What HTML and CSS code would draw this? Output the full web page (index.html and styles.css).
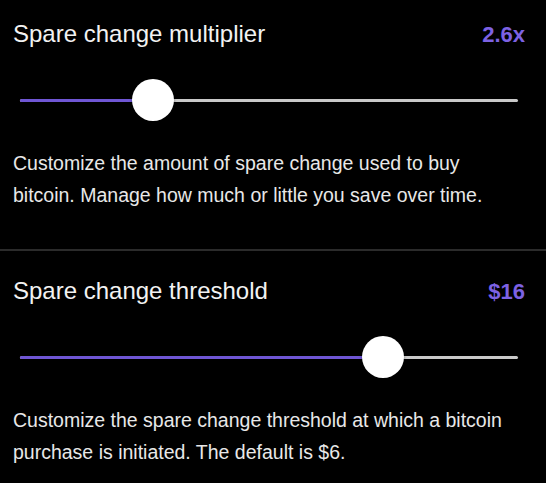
FILE: index.html
```html
<!DOCTYPE html>
<html lang="en">
<head>
<meta charset="utf-8">
<title>Spare change settings</title>
<link rel="stylesheet" href="styles.css">
</head>
<body>
<main class="settings">
  <section class="setting">
    <div class="setting-head">
      <span class="setting-title">Spare change multiplier</span>
      <span class="setting-value">2.6x</span>
    </div>
    <div class="slider">
      <div class="track"></div>
      <div class="fill" style="width: 26.8%"></div>
      <div class="thumb" style="left: calc(26.8% - 21px)"></div>
    </div>
    <p class="setting-desc">Customize the amount of spare change used to buy bitcoin. Manage how much or little you save over time.</p>
  </section>
  <div class="divider"></div>
  <section class="setting">
    <div class="setting-head">
      <span class="setting-title">Spare change threshold</span>
      <span class="setting-value">$16</span>
    </div>
    <div class="slider">
      <div class="track"></div>
      <div class="fill" style="width: 72.8%"></div>
      <div class="thumb" style="left: calc(72.8% - 21px)"></div>
    </div>
    <p class="setting-desc">Customize the spare change threshold at which a bitcoin purchase is initiated. The default is $6.</p>
  </section>
</main>
</body>
</html>
```

FILE: styles.css
```css
html, body {
  margin: 0;
  padding: 0;
  background: #000;
}

body {
  font-family: "Liberation Sans", Arial, Helvetica, sans-serif;
  color: #f2f2f2;
  width: 546px;
  height: 483px;
  overflow: hidden;
}

.settings {
  display: flex;
  flex-direction: column;
}

.setting {
  padding: 20px 0 38px 0;
}

.divider + .setting {
  padding-top: 26px;
}

.setting-head {
  display: flex;
  justify-content: space-between;
  align-items: baseline;
  padding: 0 21px 0 13px;
  height: 28px;
  line-height: 28px;
}

.setting-title {
  font-size: 24px;
  color: #f2f2f2;
}

.setting-value {
  font-size: 22px;
  font-weight: bold;
  color: #7d62e3;
}

.slider {
  position: relative;
  height: 42px;
  margin: 31px 28px 0 20px;
}

.track,
.fill {
  position: absolute;
  top: 20px;
  height: 3px;
  left: 0;
  border-radius: 1.5px;
}

.track {
  right: 0;
  background: #c9c9c9;
}

.fill {
  background: #6f56d4;
}

.thumb {
  position: absolute;
  top: 0;
  width: 42px;
  height: 42px;
  border-radius: 50%;
  background: #fff;
  box-shadow: 0 1px 3px rgba(0, 0, 0, 0.4);
}

.setting-desc {
  margin: 26px 0 0 0;
  padding: 0 21px 0 13px;
  font-size: 19.5px;
  line-height: 32px;
  color: #e8e8e8;
}

.divider {
  height: 2px;
  background: #2b2b2b;
}
```
